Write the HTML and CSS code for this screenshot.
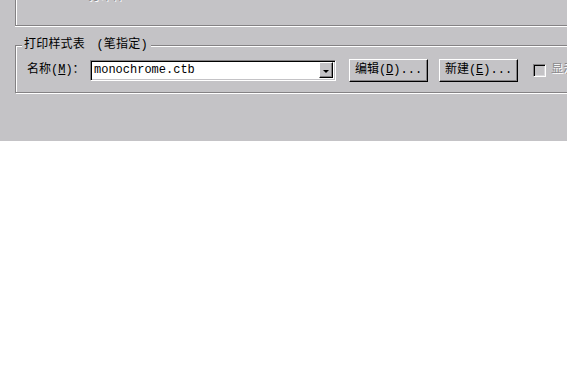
FILE: index.html
```html
<!DOCTYPE html>
<html lang="zh-CN">
<head>
<meta charset="utf-8">
<title>打印样式表</title>
<link rel="stylesheet" href="styles.css">
</head>
<body>
<div class="panel">
  <div class="group group-top">
    <div class="cut-label">打印样</div>
  </div>
  <div class="group group-style">
    <div class="legend">打印样式表 (笔指定)</div>
    <div class="row">
      <label class="name-label">名称(<u>M</u>)：</label>
      <div class="combo">
        <span class="combo-text">monochrome.ctb</span>
        <span class="combo-btn"><span class="arrow"></span></span>
      </div>
      <button class="btn btn-edit">编辑(<u>D</u>)...</button>
      <button class="btn btn-new">新建(<u>E</u>)...</button>
      <span class="check"></span>
      <span class="check-label">显示打印样式</span>
    </div>
  </div>
</div>
</body>
</html>
```

FILE: styles.css
```css
html, body {
  margin: 0;
  padding: 0;
  background: #ffffff;
}

body {
  font-family: "Liberation Mono", "Noto Sans CJK SC", monospace;
  font-size: 12px;
  line-height: 14px;
  color: #000;
}

.panel {
  height: 141px;
  background: #c4c3c6;
  padding-left: 15px;
  overflow: hidden;
  box-sizing: border-box;
  display: flow-root;
}

.group {
  width: 700px;
  box-sizing: border-box;
}

.group-top {
  display: flow-root;
  height: 26px;
  border-left: 1px solid #848284;
  border-bottom: 1px solid #848284;
  box-shadow: inset 1px 0 0 #fff, 0 1px 0 #fff;
  padding-left: 72px;
}

.cut-label {
  margin-top: -10px;
  color: #8a888b;
  text-shadow: 1px 1px 0 #fff;
  white-space: nowrap;
}

.group-style {
  position: relative;
  margin-top: 19px;
  border: 1px solid #848284;
  box-shadow: inset 1px 1px 0 #fff, 1px 1px 0 #fff;
  padding: 12px 0 10px 11px;
}

.legend {
  position: absolute;
  top: -8px;
  left: 6px;
  padding: 0 3px 0 2px;
  background: #c4c3c6;
  white-space: nowrap;
  word-spacing: 4px;
  letter-spacing: 0.2px;
}

.row {
  display: flex;
  align-items: center;
  height: 24px;
  white-space: nowrap;
}

.name-label {
  width: 63px;
  flex: none;
}

.combo {
  flex: none;
  display: flex;
  align-items: center;
  width: 246px;
  height: 21px;
  box-sizing: border-box;
  border: 1px solid;
  border-color: #848284 #fff #fff #848284;
  box-shadow: inset 1px 1px 0 #000, inset -1px -1px 0 #c4c3c6;
  background: #fff;
  padding: 2px;
}

.combo-text {
  flex: 1;
  padding-left: 1px;
}

.combo-btn {
  flex: none;
  width: 14px;
  height: 16px;
  box-sizing: border-box;
  background: #c4c3c6;
  border: 1px solid;
  border-color: #fff #000 #000 #fff;
  box-shadow: inset -1px -1px 0 #848284;
  display: flex;
  align-items: center;
  justify-content: center;
}

.arrow {
  width: 0;
  height: 0;
  margin-top: 3px;
  border-left: 3px solid transparent;
  border-right: 3px solid transparent;
  border-top: 3px solid #000;
}

.btn {
  flex: none;
  width: 79px;
  height: 23px;
  box-sizing: border-box;
  margin: 0;
  padding: 0;
  font: inherit;
  color: #000;
  background: #c4c3c6;
  border: 1px solid;
  border-color: #fff #000 #000 #fff;
  box-shadow: inset -1px -1px 0 #848284;
  text-align: center;
}

.btn-edit {
  margin-left: 13px;
}

.btn-new {
  margin-left: 11px;
}

.check {
  flex: none;
  margin-left: 15px;
  width: 13px;
  height: 13px;
  box-sizing: border-box;
  border: 1px solid;
  border-color: #848284 #fff #fff #848284;
  box-shadow: inset 1px 1px 0 #000, inset -1px -1px 0 #d8d7da;
  background: #c4c3c6;
}

.check-label {
  margin-left: 5px;
  color: #8a888b;
  text-shadow: 1px 1px 0 #fff;
}
```
